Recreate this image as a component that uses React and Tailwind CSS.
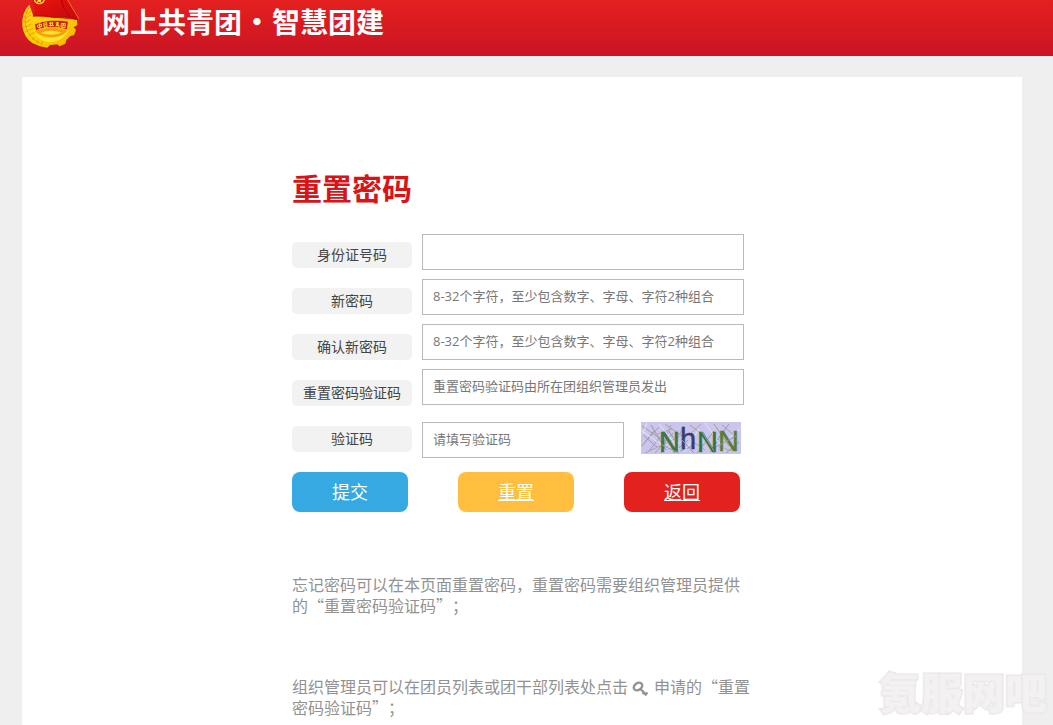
import { useState } from "react";

const fields = [
  { id: "idCard", label: "身份证号码", type: "text", placeholder: "" },
  { id: "password", label: "新密码", type: "password", placeholder: "8-32个字符，至少包含数字、字母、字符2种组合" },
  { id: "confirm", label: "确认新密码", type: "password", placeholder: "8-32个字符，至少包含数字、字母、字符2种组合" },
  { id: "resetCode", label: "重置密码验证码", type: "text", placeholder: "重置密码验证码由所在团组织管理员发出" },
];

const emptyForm = { idCard: "", password: "", confirm: "", resetCode: "", captcha: "" };

function Emblem() {
  return (
    <svg viewBox="60 0 180 144" className="h-12 w-15 shrink-0" aria-hidden="true">
      <defs>
        <linearGradient id="gold" x1="0" y1="0" x2="1" y2="1">
          <stop offset="0" stopColor="#ffd21f" />
          <stop offset="0.5" stopColor="#fdd000" />
          <stop offset="1" stopColor="#f6b00c" />
        </linearGradient>
        <linearGradient id="flag" x1="0" y1="0" x2="1" y2="1">
          <stop offset="0" stopColor="#e8150f" />
          <stop offset="1" stopColor="#c9060d" />
        </linearGradient>
      </defs>
      {/* gear and wheat ring */}
      <path
        d="M88 14 Q64 38 67 78 Q71 112 97 129 L120 139 L142 143 L150 135 L172 133 L178 139 L196 131 L199 120 L211 108 L222 106 L228 90 L221 82 L232 75 L231 59 L100 48 Z"
        fill="url(#gold)"
      />
      <g stroke="#d98a08" strokeWidth="2" fill="none">
        <path d="M87 22 Q68 55 80 88 Q91 116 122 131" />
        <path d="M76 34 L85 42 M71 48 L80 54 M69 64 L78 67 M70 80 L81 80 M75 96 L86 91 M84 110 L93 102 M96 121 L103 111 M110 130 L115 119 M124 136 L127 125" />
        <path d="M95 30 L85 42 M92 44 L80 54 M91 58 L78 67 M94 72 L81 80 M99 85 L86 91 M107 96 L93 102" />
      </g>
      <path d="M102 92 Q110 122 150 127 Q192 124 207 87 Q186 114 150 114 Q117 112 102 92Z" fill="#ffe52b" />
      <path d="M107 94 Q126 82 152 83 Q184 83 202 92 Q184 112 151 111 Q121 110 107 94Z" fill="#f49d10" />
      <path d="M122 99 Q150 86 185 98 Q153 110 122 99Z" fill="#ffe030" />
      {/* flag */}
      <path d="M96 0 L205 0 L239 57 L228 59 Q190 43 164 52 Q130 43 99 49 L106 34 Z" fill="url(#flag)" />
      <path d="M203 0 L237 57" stroke="#ef7f25" strokeWidth="3" />
      <path d="M99 49 Q130 42 165 53 Q191 44 228 58" stroke="#8f120f" strokeWidth="2" fill="none" />
      <path d="M184 0 Q187 25 207 47" stroke="#a9060c" strokeWidth="3" fill="none" />
      <circle cx="118" cy="-4" r="15" fill="none" stroke="#ffe12b" strokeWidth="4" />
      <path d="M118 -13 L121 -4 L130 -3 L122 2 L124 9 L117 5 L110 8 L113 0Z" fill="#ffe12b" />
      {/* ribbon */}
      <path d="M104 72 Q150 54 205 64 L202 89 Q148 73 107 92 Z" fill="#cb1d12" stroke="#ffdc20" strokeWidth="2" />
      <g stroke="#ffda31" strokeWidth="3" fill="none">
        <path d="M112 76 L124 72 L125 79 L114 83Z M118 70 L120 87" />
        <path d="M131 70 L140 68 L141 80 L133 82Z M133 75 L139 74" />
        <path d="M147 70 L160 69 M151 66 L151 79 M157 66 L157 78 M146 77 L162 76" />
        <path d="M167 69 L177 69 M172 66 L172 76 M168 73 L176 73 M168 80 L169 76 L177 77 L177 82" />
        <path d="M184 70 L196 71 L195 83 L183 81Z M186 75 L194 76 M191 72 L188 80" />
      </g>
    </svg>
  );
}

function Captcha() {
  return (
    <svg viewBox="0 0 100 32" className="h-8 w-25 overflow-visible" role="img" aria-label="验证码图片">
      <rect width="100" height="32" fill="#cbc5ed" />
      <g strokeWidth="1" fill="none">
        <path stroke="#a59aae" d="M1 4 L20 17 M4 20 L18 5 M8 29 L24 9 M14 31 L32 11 M2 13 L16 25 M24 2 L41 14 M32 31 L47 18 M49 3 L62 13 M69 30 L78 17 M81 3 L94 14" />
        <path stroke="#8da592" d="M1 24 L13 9 M10 3 L25 28 M20 31 L26 15 M39 29 L52 24 M56 31 L73 9 M73 2 L88 24 M85 31 L98 20 M88 2 L76 18" />
        <path stroke="#b7a2a2" d="M14 13 L31 7 M4 31 L34 17 M30 3 L22 22 M43 4 L36 17 M60 2 L48 13 M64 28 L51 19 M91 29 L78 25" />
        <path stroke="#e4e3f5" d="M0 8 L22 24 M18 2 L38 27 M43 30 L58 7 M64 1 L84 29 M88 16 L99 7 M6 1 L2 12 M26 26 L40 20" />
      </g>
      <g fontFamily="Liberation Sans" fontSize="29" strokeWidth="0.5">
        <text x="18" y="30" fill="#3d743f" stroke="#3d743f">N</text>
        <text x="39" y="27" fill="#34406f" stroke="#34406f">h</text>
        <text x="56" y="30" fill="#33723a" stroke="#33723a">N</text>
        <text x="77" y="29" fill="#597d31" stroke="#597d31">N</text>
      </g>
      <path d="M21 23 L38 31 M40 17 L53 31 M61 10 L73 29 M75 25 L95 14 M27 8 L34 18" stroke="#8c9fa0" strokeWidth="1" />
    </svg>
  );
}

function KeyIcon() {
  return (
    <svg viewBox="0 0 16 16" className="mr-1.5 ml-1 inline-block size-4 align-middle" aria-hidden="true">
      <ellipse cx="6" cy="5.5" rx="4.6" ry="3.4" transform="rotate(-35 6 5.5)" fill="none" stroke="#929292" strokeWidth="2.4" />
      <path d="M8.5 8 L14 13.5 M10.5 13 L12.8 10.7 M13 14.5 L15.5 11.5" fill="none" stroke="#929292" strokeWidth="2.2" />
    </svg>
  );
}

export default function App() {
  const [form, setForm] = useState(emptyForm);

  const handleChange = (e) => {
    setForm((prev) => ({ ...prev, [e.target.id]: e.target.value }));
  };

  const handleReset = (e) => {
    e.preventDefault();
    setForm(emptyForm);
  };

  return (
    <div className="relative flex min-h-screen flex-col bg-[#efefef] font-['Open_Sans','Noto_Sans_CJK_SC',sans-serif]">
      <header className="flex h-14 items-start gap-[22px] bg-linear-to-b from-[#e4201f] to-[#c91424] pl-5">
        <Emblem />
        <div className="flex text-[28px] leading-[42px] font-bold text-white font-['Noto_Sans_CJK_SC',sans-serif]">
          <span>网上共青团</span>
          <span className="w-[30px] text-center">•</span>
          <span>智慧团建</span>
        </div>
      </header>

      <main className="mt-[21px] mr-[31px] ml-[22px] flex-1 bg-white">
        <div className="mx-auto max-w-[460px] pt-[92px]">
          <h1 className="text-[30px] leading-10 font-bold text-[#d71518]">重置密码</h1>

          <form className="mt-[25px]" onSubmit={(e) => e.preventDefault()}>
            <div className="flex gap-2.5">
              <div className="flex w-30 shrink-0 flex-col gap-5 pt-2">
                {fields.map((field) => (
                  <label
                    key={field.id}
                    htmlFor={field.id}
                    className="h-[26px] rounded-[5px] bg-[#f2f2f2] text-center text-sm leading-[26px] text-[#444]"
                  >
                    {field.label}
                  </label>
                ))}
                <label
                  htmlFor="captcha"
                  className="h-[26px] rounded-[5px] bg-[#f2f2f2] text-center text-sm leading-[26px] text-[#444]"
                >
                  验证码
                </label>
              </div>
              <div className="flex max-w-[322px] flex-1 flex-col gap-[9px]">
                {fields.map((field) => (
                  <input
                    key={field.id}
                    id={field.id}
                    type={field.type}
                    value={form[field.id]}
                    onChange={handleChange}
                    placeholder={field.placeholder}
                    className="h-9 w-full border border-[#b9b9b9] px-2.5 pb-0.5 text-[13px] text-[#444] placeholder:text-[#777]"
                  />
                ))}
                <div className="mt-2 flex items-start gap-[17px]">
                  <input
                    id="captcha"
                    type="text"
                    value={form.captcha}
                    onChange={handleChange}
                    placeholder="请填写验证码"
                    className="h-9 w-[202px] border border-[#b9b9b9] px-2.5 pb-0.5 text-[13px] text-[#444] placeholder:text-[#777]"
                  />
                  <Captcha />
                </div>
              </div>
            </div>

            <div className="mt-3.5 flex gap-[50px] text-center text-lg leading-10 text-white">
              <button type="submit" className="h-10 w-29 rounded-lg bg-[#36a9e3]">
                提交
              </button>
              <a href="#reset" onClick={handleReset} className="h-10 w-29 rounded-lg bg-[#ffbe3d] underline">
                重置
              </a>
              <a href="#back" className="h-10 w-29 rounded-lg bg-[#e3211f] underline">
                返回
              </a>
            </div>
          </form>

          <div className="mt-[62px] flex flex-col gap-15 text-base leading-[21px] text-[#929292] [text-spacing-trim:space-all] font-['Noto_Sans_CJK_SC',sans-serif]">
            <p>忘记密码可以在本页面重置密码，重置密码需要组织管理员提供的“重置密码验证码”；</p>
            <p>
              组织管理员可以在团员列表或团干部列表处点击
              <KeyIcon />
              申请的“重置密码验证码”；
            </p>
          </div>
        </div>
      </main>

      <div className="pointer-events-none absolute right-1.5 bottom-1.5 text-[42px] leading-13 font-black text-[#f3f1f2] [-webkit-text-stroke:3px_#ece9eb] [paint-order:stroke_fill]">
        氪服网吧
      </div>
    </div>
  );
}
